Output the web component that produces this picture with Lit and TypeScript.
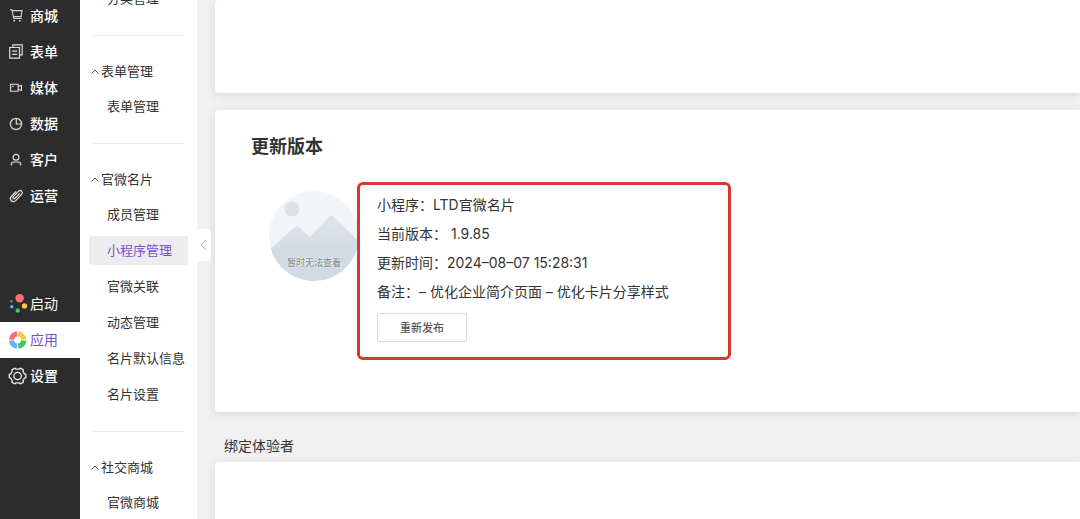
import { LitElement, html, css, svg } from "lit";
import { customElement } from "lit/decorators.js";
import { classMap } from "lit/directives/class-map.js";

const icons: Record<string, unknown> = {
  cart: svg`<g fill="none" stroke="#d6d6d6" stroke-width="1.1"><path d="M2 2.800h1.900l1.900 8.700h8M4 3.600h10l-.9 6H5.400"/><path d="M5.500 13.700h1.600M11 13.700h1.600" stroke-width="1.500"/></g>`,
  form: svg`<g fill="none" stroke="#dedede" stroke-width="1.2"><path d="M4.800 4.300V1.800h9.400v10h-2.500"/><path d="M1.700 4.500h9.800v10.600H1.700zM4.200 8.200h5M4.200 11.400h5"/></g>`,
  media: svg`<g fill="none" stroke="#dedede" stroke-width="1.1"><path d="M2.500 5.300h7.700v7H2.500zM10.500 7.600l3-1.200v5l-3-1.200M4 7.400h1.500"/></g>`,
  data: svg`<g fill="none" stroke="#dedede" stroke-width="1.2"><circle cx="8" cy="9" r="5.600"/><path d="M8.300 3.400V9h5.300"/></g>`,
  user: svg`<g fill="none" stroke="#dedede" stroke-width="1.200"><circle cx="8" cy="6.300" r="2.900"/><path d="M3.400 14.400v-1.200q0-2.200 2.300-2.200h4.600q2.300 0 2.300 2.200v1.200"/></g>`,
  clip: svg`<path d="M11.700 6.400 7 11.300q-1 .9-1.800.1-.7-.8.2-1.800l5.200-5.400q1.800-1.500 3.100-.1 1.300 1.500 0 3.100l-6 6.400q-2.300 2.100-4.400.2-1.900-2.200.1-4.500l4.700-4.900" fill="none" stroke="#e6e6e6" stroke-width="1.200"/>`,
  launch: svg`<circle cx="11.600" cy="3.200" r="4.200" fill="#fb6f74"/><circle cx="16.500" cy="11" r="2.700" fill="#fdc644"/><circle cx="9.700" cy="15.500" r="2.200" fill="#3dc95c"/><circle cx="3.800" cy="11.800" r="1.700" fill="#5fb0fb"/><circle cx="3.400" cy="6.300" r="1.200" fill="#4a97d8"/>`,
  apps: svg`<g fill="none" stroke-width="5.200"><path d="M3.500 8.600A6.200 6.200 0 0 1 9.200 2.900" stroke="#fb6f74"/><path d="M10.200 2.900A6.200 6.200 0 0 1 15.800 8.600" stroke="#fdc644"/><path d="M15.800 9.600A6.200 6.200 0 0 1 10.200 15.200" stroke="#3dc95c"/><path d="M9.200 15.200A6.200 6.200 0 0 1 3.500 9.600" stroke="#64b0fb"/></g>`,
  gear: svg`<g transform="translate(.6)" fill="none" stroke="#f0f0f0" stroke-width="1.300" stroke-linejoin="round"><path d="M6.300 1.100 7.400 2.200h3.200l1.100-1.100 3 1.700-.3 1.600 1.400 2.500 1.500.5v3.200l-1.500.5-1.400 2.500.3 1.600-3 1.700-1.100-1.100H7.400l-1.100 1.100-3-1.700.3-1.600-1.400-2.500-1.500-.5V7.400l1.500-.5 1.400-2.500-.3-1.600z"/><circle cx="9" cy="9" r="3.700"/></g>`,
};

const contentNav = [
  ["cart", "商城"],
  ["form", "表单"],
  ["media", "媒体"],
  ["data", "数据"],
  ["user", "客户"],
  ["clip", "运营"],
];
const systemNav = [
  ["launch", "启动"],
  ["apps", "应用"],
  ["gear", "设置"],
];

const groups = [
  { title: "表单管理", items: ["表单管理"] },
  {
    title: "官微名片",
    items: ["成员管理", "小程序管理", "官微关联", "动态管理", "名片默认信息", "名片设置"],
  },
  { title: "社交商城", items: ["官微商城"] },
];

@customElement("main-nav")
class MainNav extends LitElement {
  static styles = css`
    :host { display: block; background: #2c2c2c; }
    nav { display: grid; gap: 72px; margin-top: -2px; }
    .link {
      display: flex; align-items: center; gap: 4px; height: 36px; padding-left: 8px;
      color: #fff; font-size: 14px; line-height: 36px; font-weight: 500; text-decoration: none;
    }
    .label { height: 36px; }
    .active { background: #fff; color: #7a4ed0; }
    .colour { font-weight: 400; }
    .icon { flex: none; width: 18px; height: 18px; overflow: visible; }
  `;
  link([icon, label]: string[]) {
    const active = label === "应用";
    return html`<a href="#" class=${classMap({ link: true, active, colour: active || icon === "launch" })}>
      <svg class="icon" viewBox="0 0 18 18" aria-hidden="true">${icons[icon]}</svg><span class="label">${label}</span>
    </a>`;
  }
  render() {
    return html`<nav>
      <div>${contentNav.map((n) => this.link(n))}</div>
      <div>${systemNav.map((n) => this.link(n))}</div>
    </nav>`;
  }
}

@customElement("sub-nav")
class SubNav extends LitElement {
  static styles = css`
    :host { display: block; position: relative; background: #fff; }
    nav { margin-top: -19px; }
    .group { display: flow-root; padding-bottom: 18px; }
    .group + .group::before {
      content: ""; display: block; height: 1px; margin: 0 13px 18px; background: #ececec;
    }
    .title {
      display: flex; align-items: center; gap: 2px; width: 100%; height: 35px; padding: 0 0 2px 11px;
      border: 0; background: none; color: #333; font: inherit; text-align: left;
    }
    .chevron { width: 8px; height: 8px; }
    .items { display: grid; }
    .item {
      display: block; height: 29px; margin: 3px 9px 4px; padding-left: 18px; border-radius: 3px;
      color: #333; line-height: 28px; text-decoration: none; white-space: nowrap;
    }
    .active { background: #ededf0; color: #7a4ed0; }
    .toggle {
      position: absolute; left: 100%; top: 229px; width: 14px; height: 32px; padding: 0;
      display: grid; place-items: center; border: 0; border-radius: 0 4px 4px 0; background: #fff;
    }
    .arrow { width: 8px; height: 12px; }
  `;
  item(label: string) {
    return html`<a href="#" class=${classMap({ item: true, active: label === "小程序管理" })}>${label}</a>`;
  }
  render() {
    return html`<nav>
        <div class="group"><div class="items">${this.item("分类管理")}</div></div>
        ${groups.map(
          (g) => html`<div class="group">
            <button class="title">
              <svg class="chevron" viewBox="0 0 8 8" aria-hidden="true"><path d="M.5 6.500 4 3l3.500 3.500" fill="none" stroke="#555"/></svg>${g.title}
            </button>
            <div class="items">${g.items.map((i) => this.item(i))}</div>
          </div>`
        )}
      </nav>
      <button class="toggle" aria-label="收起">
        <svg class="arrow" viewBox="0 0 8 12"><path d="M6 1 1 6l5 5" fill="none" stroke="#b5b5bb"/></svg>
      </button>`;
  }
}

@customElement("version-card")
class VersionCard extends LitElement {
  static styles = css`
    :host { display: block; padding: 23px 36px 52px; }
    h2 { margin: 0; font-size: 18px; line-height: 28px; font-weight: 700; }
    .body { display: flex; align-items: flex-start; padding: 21px 0 0 18px; }
    .avatar { position: relative; flex: none; width: 90px; height: 90px; margin: 9px -2px 0 0; }
    .picture { display: block; width: 90px; height: 90px; }
    .caption {
      position: absolute; inset: auto 0 10px; font-size: 9px; line-height: 16px;
      text-align: center; color: #858b91; font-weight: 500;
      text-shadow: 0 0 1px #fff, 0 0 2px #fff;
    }
    .info {
      position: relative; flex: 0 1 374px; box-sizing: border-box; padding: 5px 17px 15px;
      border: 3px solid #d63a2f; border-radius: 6px;
    }
    p { margin: 0; font-size: 14px; line-height: 29px; white-space: pre-wrap; }
    .publish {
      display: block; width: 90px; height: 29px; margin-top: 7px; padding: 0 0 2px;
      border: 1px solid #d5dde3; border-radius: 2px; background: #fff;
      color: #555; font: inherit; font-size: 11px; font-weight: 500;
    }
  `;
  render() {
    return html`<h2>更新版本</h2>
      <div class="body">
        <div class="avatar">
          <svg class="picture" viewBox="0 0 90 90" aria-hidden="true">
            <defs>
              <clipPath id="disc"><circle cx="45" cy="45" r="45" /></clipPath>
              <linearGradient id="sky" x2="0" y2="1"><stop stop-color="#f3f7fa" /><stop offset="1" stop-color="#eef2f6" /></linearGradient>
              <linearGradient id="hill" x2="0" y2="1"><stop stop-color="#e0e4e7" /><stop offset=".5" stop-color="#d3dce4" /><stop offset="1" stop-color="#d0dae3" /></linearGradient>
            </defs>
            <g clip-path="url(#disc)">
              <path d="M0 0h90v90H0z" fill="url(#sky)" />
              <circle cx="23" cy="18" r="7.500" fill="#dde2e6" />
              <path d="M0 59 26 36q2-1.800 4 0l11 10L60 26q2.500-2.500 5 0l25 25v39H0z" fill="url(#hill)" />
            </g>
          </svg>
          <span class="caption">暂时无法查看</span>
        </div>
        <div class="info">
          <p>小程序：LTD官微名片</p>
          <p>当前版本： 1.9.85</p>
          <p>更新时间：2024–08–07 15:28:31</p>
          <p>备注：– 优化企业简介页面 – 优化卡片分享样式</p>
          <button class="publish">重新发布</button>
        </div>
      </div>`;
  }
}

@customElement("app-root")
class AppRoot extends LitElement {
  static styles = css`
    :host {
      display: grid; grid-template-columns: 80px 117px minmax(0, 1fr);
      height: 100vh; overflow: hidden; background: #f1f1f2; color: #333;
      font-family: Inter, "Noto Sans CJK SC", sans-serif; font-size: 13px;
    }
    main { display: flex; flex-direction: column; padding-left: 18px; }
    .card {
      flex: none; background: #fff; border-radius: 4px 0 0 4px;
      box-shadow: 0 2px 10px rgba(60, 60, 90, 0.14);
    }
    .previous { height: 93px; margin-bottom: 17px; }
    .rest { flex: 1; }
    h3 { margin: 0; padding: 19px 9px 2px; font-size: 14px; line-height: 29px; font-weight: 400; }
    sub-nav { z-index: 1; }
  `;
  render() {
    return html`<main-nav></main-nav>
      <sub-nav></sub-nav>
      <main>
        <section class="card previous"></section>
        <version-card class="card"></version-card>
        <h3>绑定体验者</h3>
        <section class="card rest"></section>
      </main>`;
  }
}
